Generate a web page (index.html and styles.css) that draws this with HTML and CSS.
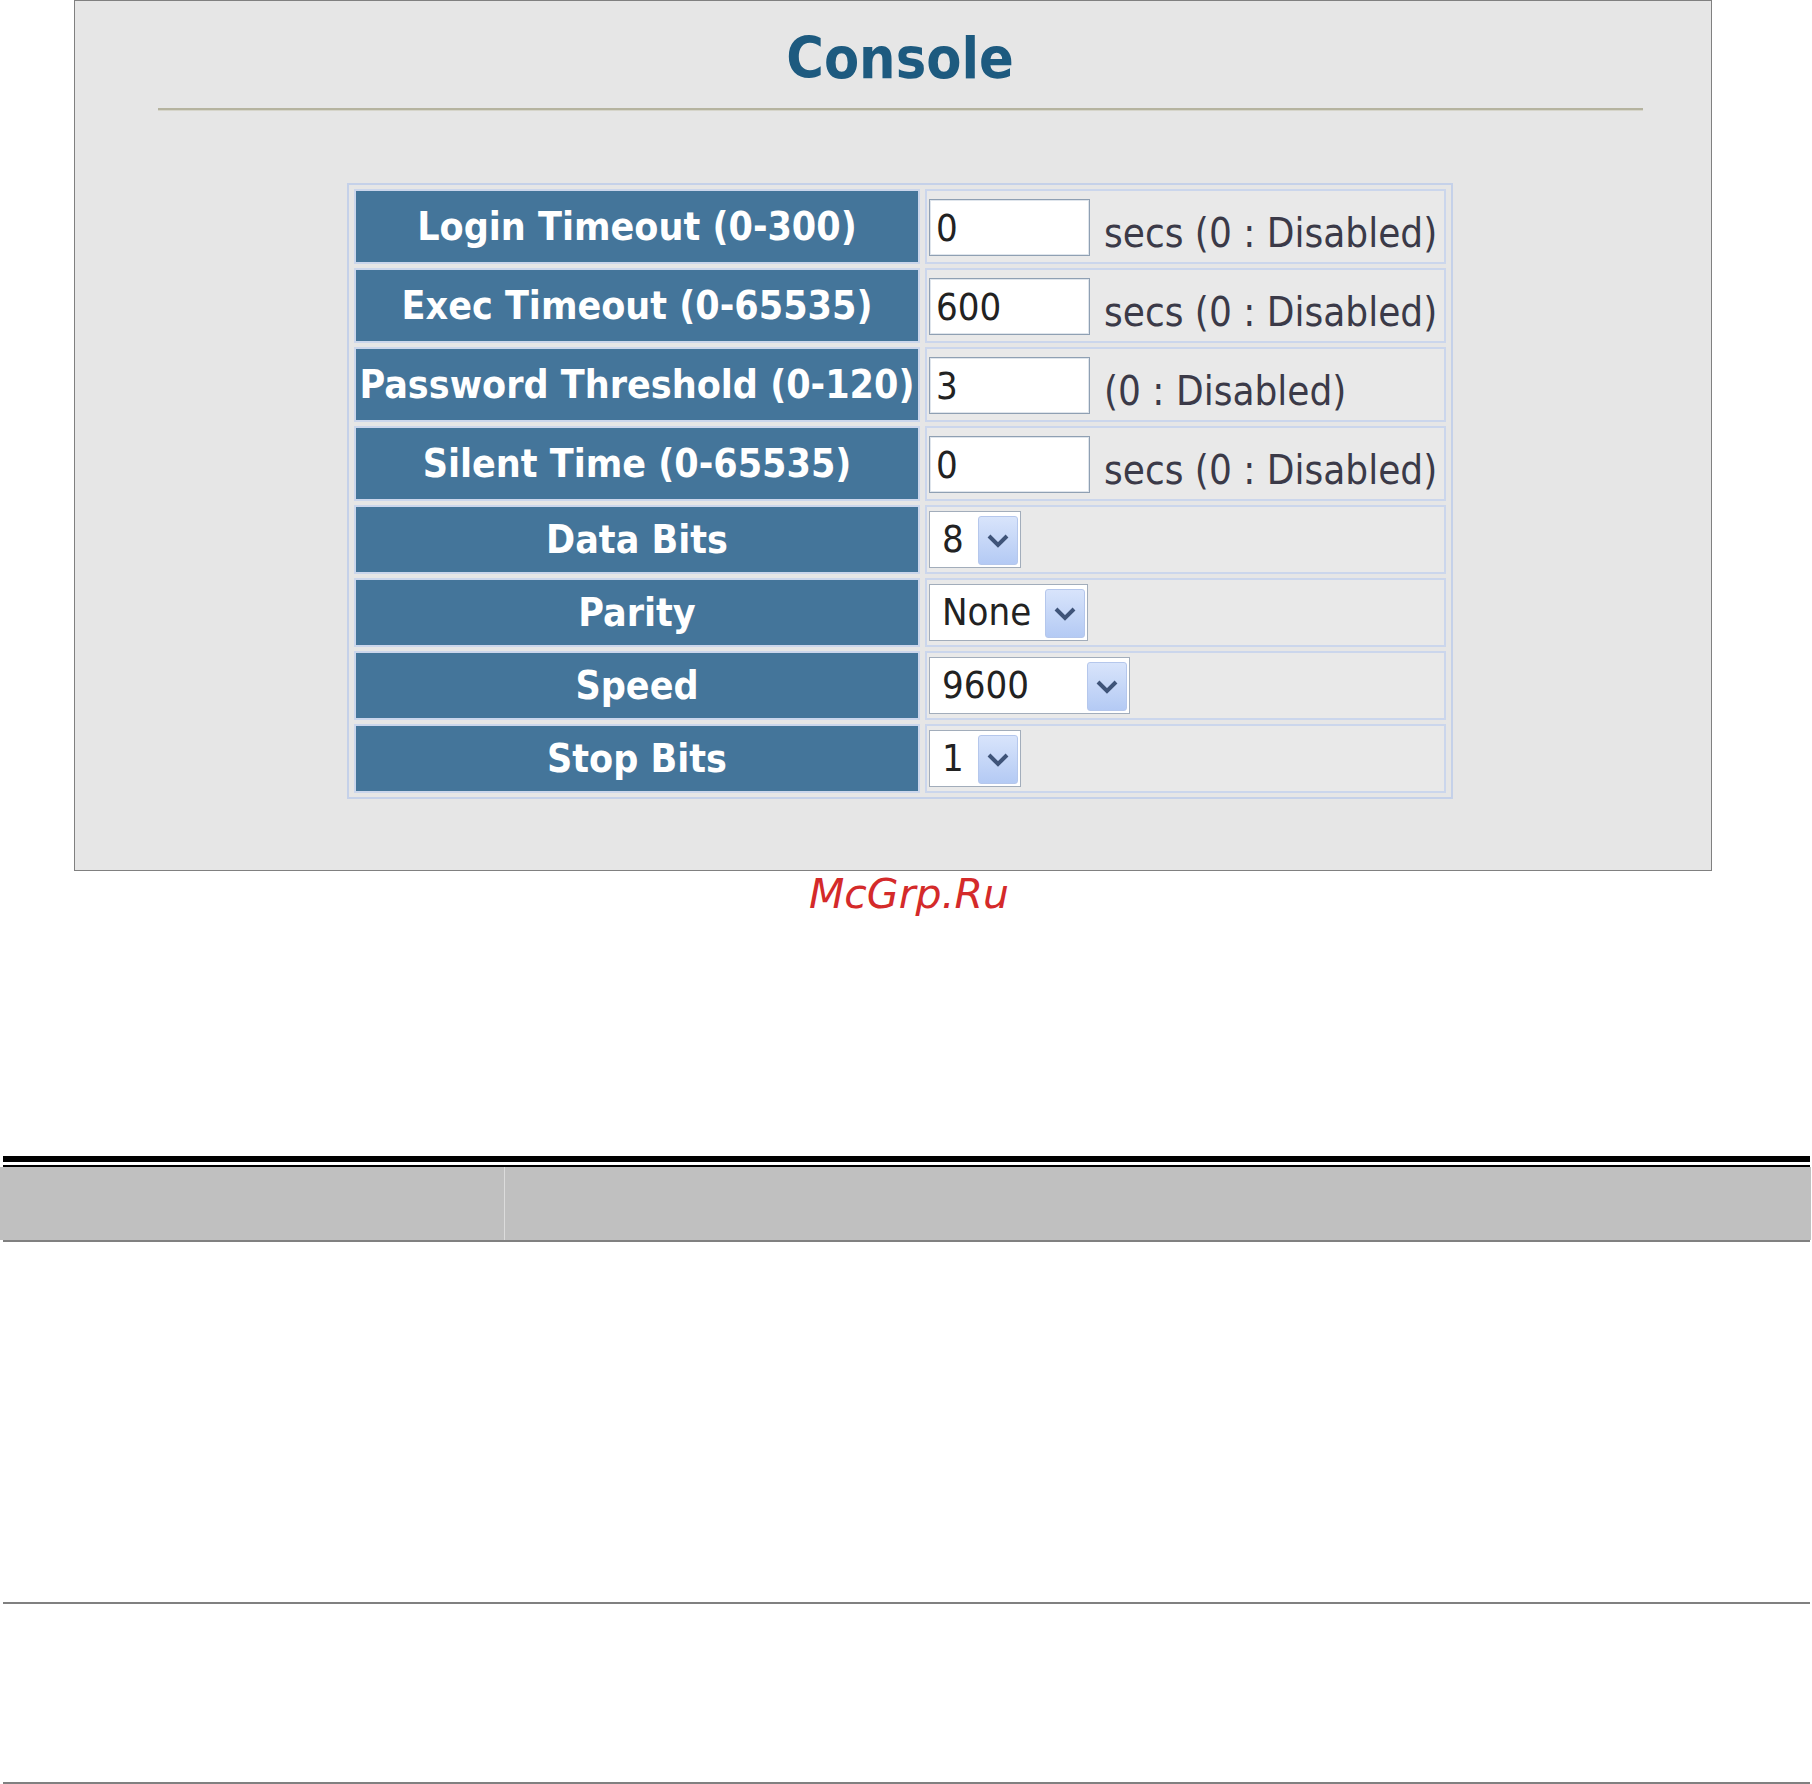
FILE: index.html
```html
<!DOCTYPE html>
<html lang="en">
<head>
    <meta charset="UTF-8">
    <meta name="viewport" content="width=device-width, initial-scale=1.0">
    <title>Console</title>
    <link rel="stylesheet" href="styles.css">
</head>
<body>

    <div class="panel">
        <h1>Console</h1>
        <div class="title-rule"></div>

        <table class="console-table">
            <tr>
                <td class="label">Login Timeout (0-300)</td>
                <td class="value">
                    <div class="field text-field">
                        <input type="text" id="loginTimeout" value="0">
                        <span class="hint">secs (0 : Disabled)</span>
                    </div>
                </td>
            </tr>
            <tr>
                <td class="label">Exec Timeout (0-65535)</td>
                <td class="value">
                    <div class="field text-field">
                        <input type="text" id="execTimeout" value="600">
                        <span class="hint">secs (0 : Disabled)</span>
                    </div>
                </td>
            </tr>
            <tr>
                <td class="label">Password Threshold (0-120)</td>
                <td class="value">
                    <div class="field text-field">
                        <input type="text" id="passwordThreshold" value="3">
                        <span class="hint">(0 : Disabled)</span>
                    </div>
                </td>
            </tr>
            <tr>
                <td class="label">Silent Time (0-65535)</td>
                <td class="value">
                    <div class="field text-field">
                        <input type="text" id="silentTime" value="0">
                        <span class="hint">secs (0 : Disabled)</span>
                    </div>
                </td>
            </tr>
            <tr>
                <td class="label">Data Bits</td>
                <td class="value">
                    <div class="field select-field">
                        <div class="dropdown dd-small">
                            <span class="dd-text">8</span>
                            <span class="dd-arrow"><svg width="24" height="15" viewBox="0 0 24 15"><path d="M3 3 L12 12 L21 3" fill="none" stroke="#3f5479" stroke-width="4"/></svg></span>
                        </div>
                    </div>
                </td>
            </tr>
            <tr>
                <td class="label">Parity</td>
                <td class="value">
                    <div class="field select-field">
                        <div class="dropdown dd-medium">
                            <span class="dd-text">None</span>
                            <span class="dd-arrow"><svg width="24" height="15" viewBox="0 0 24 15"><path d="M3 3 L12 12 L21 3" fill="none" stroke="#3f5479" stroke-width="4"/></svg></span>
                        </div>
                    </div>
                </td>
            </tr>
            <tr>
                <td class="label">Speed</td>
                <td class="value">
                    <div class="field select-field">
                        <div class="dropdown dd-large">
                            <span class="dd-text">9600</span>
                            <span class="dd-arrow"><svg width="24" height="15" viewBox="0 0 24 15"><path d="M3 3 L12 12 L21 3" fill="none" stroke="#3f5479" stroke-width="4"/></svg></span>
                        </div>
                    </div>
                </td>
            </tr>
            <tr>
                <td class="label">Stop Bits</td>
                <td class="value">
                    <div class="field select-field">
                        <div class="dropdown dd-small">
                            <span class="dd-text">1</span>
                            <span class="dd-arrow"><svg width="24" height="15" viewBox="0 0 24 15"><path d="M3 3 L12 12 L21 3" fill="none" stroke="#3f5479" stroke-width="4"/></svg></span>
                        </div>
                    </div>
                </td>
            </tr>
        </table>
    </div>

    <div class="mark">McGrp.Ru</div>

    <!-- parameter table below the screen capture -->
    <div class="doc-table">
        <div class="rule-heavy"></div>
        <div class="rule-thin"></div>
        <div class="doc-head">
            <div class="doc-col-object"></div>
            <div class="doc-col-desc"></div>
        </div>
        <div class="rule-grey"></div>
        <div class="doc-row"></div>
        <div class="rule-grey"></div>
        <div class="doc-gap"></div>
        <div class="rule-grey"></div>
    </div>

</body>
</html>
```

FILE: styles.css
```css
body {
    margin: 0;
    background-color: #fff;
    font-family: "DejaVu Sans Condensed", "DejaVu Sans", sans-serif;
    font-stretch: condensed;
}
.panel {
    box-sizing: border-box;
    width: 1638px;
    height: 871px;
    margin-left: 74px;
    padding: 24px 0 0 14px;
    background-color: #e6e6e6;
    border: 1px solid #808080;
}
h1 {
    margin: 0;
    text-align: center;
    font-size: 57px;
    line-height: 66px;
    font-weight: bold;
    color: #1d5a7f;
}
.title-rule {
    width: 1485px;
    height: 2px;
    margin: 17px auto 0;
    background-color: #b5b39f;
    border-bottom: 1px solid #d6d5ca;
}
.console-table {
    width: 1106px;
    margin: 72px auto 0;
    table-layout: fixed;
    border-collapse: separate;
    border-spacing: 5px 4px;
    border: 2px solid #c5d1e9;
}
.console-table td {
    padding: 0;
    border: 2px solid #cbd6ec;
}
.console-table .label {
    width: 562px;
    background-color: #44759a;
    color: #fff;
    font-size: 39px;
    font-weight: bold;
    text-align: center;
    white-space: nowrap;
}
.console-table .value {
    padding-left: 2px;
    background-color: #e9e9e9;
}
.field {
    display: flex;
    box-sizing: border-box;
}
.text-field {
    height: 71px;
    align-items: flex-end;
    padding-bottom: 6px;
}
.select-field {
    height: 65px;
    align-items: center;
}
.text-field input {
    box-sizing: border-box;
    width: 161px;
    height: 57px;
    margin: 0 14px 0 0;
    padding: 0 6px;
    border: 1px solid #8fa0b3;
    box-shadow: inset 0 0 0 1px #dfe5ec;
    background-color: #fff;
    font-family: inherit;
    font-stretch: condensed;
    font-size: 38px;
    color: #222;
    outline: none;
}
.hint {
    font-size: 40px;
    color: #3b3a48;
    white-space: nowrap;
}
.dropdown {
    display: flex;
    box-sizing: border-box;
    height: 57px;
    border: 1px solid #a2adbb;
    background-color: #fff;
}
.dd-small { width: 92px; }
.dd-medium { width: 159px; }
.dd-large { width: 201px; }
.dd-text {
    flex: 1;
    padding-left: 12px;
    font-size: 38px;
    line-height: 55px;
    color: #222;
}
.dd-arrow {
    display: flex;
    align-items: center;
    justify-content: center;
    width: 38px;
    margin: 4px 2px 2px 0;
    border: 1px solid #b5c7ec;
    border-radius: 3px;
    background: linear-gradient(#d8e4fb, #b4caf4);
}
.mark {
    height: 46px;
    padding-left: 6px;
    text-align: center;
    font-family: "DejaVu Sans", sans-serif;
    font-stretch: normal;
    font-style: italic;
    font-size: 41px;
    line-height: 46px;
    color: #d42a2a;
}
.doc-table {
    margin-top: 239px;
}
.rule-heavy {
    height: 6px;
    margin: 0 2px 0 3px;
    background-color: #000;
}
.rule-thin {
    height: 2px;
    margin: 3px 2px 0 3px;
    background-color: #000;
}
.doc-head {
    display: grid;
    grid-template-columns: 505px 1fr;
    height: 73px;
    margin-right: 1px;
    background-color: #c0c0c0;
}
.doc-col-object {
    border-right: 1px solid #dcdcdc;
}
.rule-grey {
    height: 2px;
    margin: 0 2px 0 3px;
    background-color: #808080;
}
.doc-row {
    height: 360px;
}
.doc-gap {
    height: 178px;
}
```
